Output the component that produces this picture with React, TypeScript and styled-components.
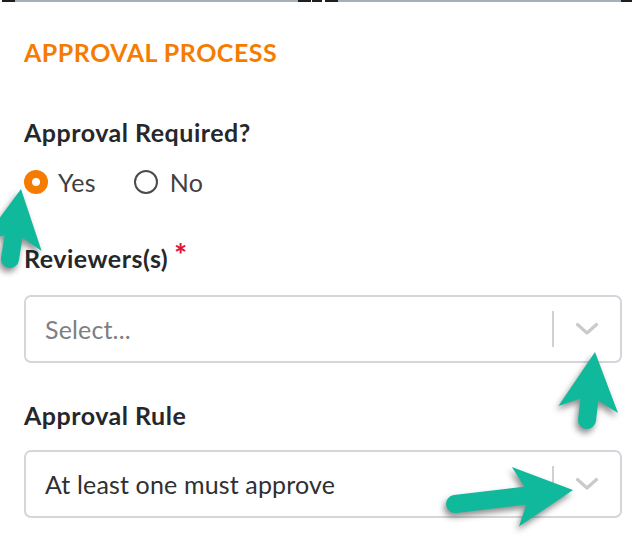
import React from "react";
import styled, { createGlobalStyle } from "styled-components";

const GlobalStyle = createGlobalStyle`
  html, body {
    margin: 0;
    padding: 0;
    background: #ffffff;
  }
  body {
    font-family: Lato, "Open Sans", Arial, sans-serif;
    -webkit-font-smoothing: antialiased;
  }
`;

const Page = styled.div`
  position: relative;
  width: 632px;
  height: 544px;
  overflow: hidden;
  background: #ffffff;
`;

const TopStrip = styled.div`
  display: flex;
  height: 2px;
`;

const StripPart = styled.div<{ w: number; tone: "dark" | "grey" | "none" }>`
  flex: 0 0 ${({ w }) => w}px;
  background: ${({ tone }) =>
    tone === "dark" ? "#1e1f20" : tone === "grey" ? "#a7b0b8" : "transparent"};
`;

const Form = styled.div`
  display: flex;
  flex-direction: column;
  padding: 36px 10px 0 24px;
`;

const SectionTitle = styled.div`
  font-size: 25px;
  line-height: 29px;
  font-weight: 700;
  letter-spacing: 0.5px;
  color: #f57c00;
  text-transform: uppercase;
`;

const Label = styled.div<{ top: number }>`
  margin-top: ${({ top }) => top}px;
  font-size: 25px;
  line-height: 29px;
  font-weight: 700;
  letter-spacing: 0.5px;
  color: #26272a;
  display: flex;
  align-items: flex-start;
`;

const Required = styled.span`
  color: #e0173c;
  font-size: 30px;
  font-weight: 900;
  line-height: 20px;
  margin-left: 6px;
  margin-top: 0px;
`;

const RadioRow = styled.div`
  display: flex;
  align-items: center;
  margin-top: 20px;
  height: 29px;
`;

const RadioOption = styled.label`
  display: flex;
  align-items: center;
  margin-right: 38px;
  font-size: 25px;
  letter-spacing: 0.3px;
  color: #404144;
`;

const RadioDot = styled.span<{ checked: boolean }>`
  box-sizing: border-box;
  width: 24px;
  height: 24px;
  border-radius: 50%;
  margin-right: ${({ checked }) => (checked ? 10 : 12)}px;
  border: ${({ checked }) => (checked ? "8.5px solid #f57c00" : "2px solid #4a4b4e")};
  background: #ffffff;
`;

const SelectBox = styled.div<{ top: number }>`
  margin-top: ${({ top }) => top}px;
  box-sizing: border-box;
  height: 68px;
  border: 2px solid #d3d7dc;
  border-radius: 7px;
  display: flex;
  align-items: center;
  padding-left: 19px;
`;

const SelectValue = styled.div<{ placeholder?: boolean }>`
  flex: 1;
  font-size: 25px;
  letter-spacing: 0.15px;
  color: ${({ placeholder }) => (placeholder ? "#7e7f82" : "#2f3032")};
`;

const Separator = styled.span`
  width: 2px;
  height: 36px;
  background: #cfd1d4;
`;

const ChevronWrap = styled.div`
  width: 66px;
  display: flex;
  justify-content: center;
  align-items: center;
`;

const Overlay = styled.svg`
  position: absolute;
  left: 0;
  top: 0;
  pointer-events: none;
  filter: drop-shadow(-2px 4px 3px rgba(0, 0, 0, 0.45));
`;

const Chevron = () => (
  <svg width="24" height="14" viewBox="0 0 24 14">
    <polyline
      points="2.5,2.5 12,11 21.5,2.5"
      fill="none"
      stroke="#c9cacc"
      strokeWidth="3.2"
      strokeLinecap="round"
      strokeLinejoin="round"
    />
  </svg>
);

interface ArrowProps {
  tail: [number, number];
  tip: [number, number];
}

const Arrow = ({ tail, tip }: ArrowProps) => {
  const dx = tip[0] - tail[0];
  const dy = tip[1] - tail[1];
  const len = Math.sqrt(dx * dx + dy * dy);
  const angle = (Math.atan2(dy, dx) * 180) / Math.PI;
  const s = 9;
  const h = 58;
  const w = 30;
  const b = 10;
  const d = `M0,${-s} L${len - h + b},${-s} L${len - h},${-w} L${len},0 L${len - h},${w} L${len - h + b},${s} L0,${s} A${s},${s} 0 0 1 0,${-s} Z`;
  return (
    <path
      d={d}
      fill="#10b99b"
      transform={`translate(${tail[0]} ${tail[1]}) rotate(${angle})`}
    />
  );
};

const strip: { w: number; tone: "dark" | "grey" | "none" }[] = [
  { w: 2, tone: "none" },
  { w: 13, tone: "dark" },
  { w: 283, tone: "grey" },
  { w: 13, tone: "dark" },
  { w: 1, tone: "none" },
  { w: 10, tone: "dark" },
  { w: 3, tone: "none" },
  { w: 13, tone: "dark" },
  { w: 283, tone: "grey" },
  { w: 11, tone: "dark" },
];

const App = () => (
  <Page>
    <GlobalStyle />
    <TopStrip>
      {strip.map((p, i) => (
        <StripPart key={i} w={p.w} tone={p.tone} />
      ))}
    </TopStrip>
    <Form>
      <SectionTitle>Approval Process</SectionTitle>
      <Label top={51}>Approval Required?</Label>
      <RadioRow>
        <RadioOption>
          <RadioDot checked />
          Yes
        </RadioOption>
        <RadioOption>
          <RadioDot checked={false} />
          No
        </RadioOption>
      </RadioRow>
      <Label top={48}>
        Reviewers(s)
        <Required>*</Required>
      </Label>
      <SelectBox top={22}>
        <SelectValue placeholder>Select...</SelectValue>
        <Separator />
        <ChevronWrap>
          <Chevron />
        </ChevronWrap>
      </SelectBox>
      <Label top={38}>Approval Rule</Label>
      <SelectBox top={20}>
        <SelectValue>At least one must approve</SelectValue>
        <Separator />
        <ChevronWrap>
          <Chevron />
        </ChevronWrap>
      </SelectBox>
    </Form>
    <Overlay width="632" height="544" viewBox="0 0 632 544">
      <Arrow tail={[10, 259]} tip={[21, 189]} />
      <Arrow tail={[587, 420]} tip={[595, 352]} />
      <Arrow tail={[455, 504]} tip={[573, 490]} />
    </Overlay>
  </Page>
);

export default App;
